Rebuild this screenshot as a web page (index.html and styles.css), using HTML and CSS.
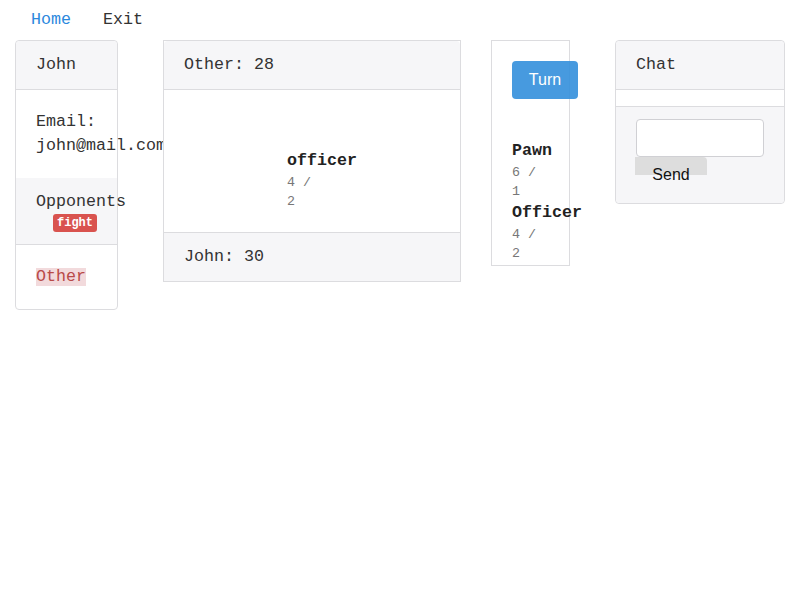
FILE: index.html
```html
<!DOCTYPE html>
<html>
<head>
<meta charset="utf-8">
<link rel="stylesheet" href="styles.css">
</head>
<body>
<nav class="nav">
  <a class="nav-link active" href="#">Home</a>
  <a class="nav-link" href="#">Exit</a>
</nav>
<main class="layout">
  <section class="card card-user">
    <div class="card-header">John</div>
    <div class="card-body">Email: john@mail.com</div>
    <div class="opponents">
      <div>Opponents</div>
      <div class="badge-row"><span class="badge">fight</span></div>
    </div>
    <div class="card-body"><span class="mark">Other</span></div>
  </section>

  <section class="card card-board">
    <div class="card-header">Other: 28</div>
    <div class="board">
      <div class="piece">
        <div class="piece-name">officer</div>
        <div class="piece-stats">4 / 2</div>
      </div>
    </div>
    <div class="card-footer">John: 30</div>
  </section>

  <section class="card card-hand">
    <button class="btn-turn">Turn</button>
    <div class="hand">
      <div class="piece-name">Pawn</div>
      <div class="piece-stats">6 / 1</div>
      <div class="piece-name">Officer</div>
      <div class="piece-stats">4 / 2</div>
    </div>
  </section>

  <section class="card card-chat">
    <div class="card-header">Chat</div>
    <div class="chat-body"></div>
    <div class="chat-footer">
      <input class="chat-input" type="text">
      <button class="btn-send">Send</button>
    </div>
  </section>
</main>
</body>
</html>
```

FILE: styles.css
```css
* { box-sizing: border-box; }
body {
  margin: 0;
  font-family: "Liberation Mono", monospace;
  font-size: 16.67px;
  line-height: 24px;
  color: #333;
  background: #fff;
}
.nav {
  display: flex;
  padding: 8px 0 8px 31px;
}
.nav-link {
  color: #333;
  text-decoration: none;
  margin-right: 32px;
}
.nav-link.active { color: #2b88dd; }

.layout {
  display: flex;
  align-items: flex-start;
  padding: 0 15px;
  gap: 30px;
}
.card {
  border: 1px solid #dcdcdf;
  background: #fff;
}
.card-user { width: 103px; margin-right: 15px; border-radius: 4px; }
.card-board { width: 298px; }
.card-hand { width: 79px; margin-right: 15px; padding: 20px 20px 2px; }
.card-chat { width: 170px; border-radius: 4px; }

.card-header {
  background: #f6f6f8;
  padding: 12px 20px;
  border-bottom: 1px solid #dcdcdf;
  border-radius: 4px 4px 0 0;
}
.card-body {
  padding: 20px;
}
.opponents {
  background: #f6f6f8;
  padding: 12px 20px;
  border-bottom: 1px solid #dcdcdf;
}
.badge-row {
  display: flex;
  justify-content: flex-end;
}
.badge {
  display: inline-block;
  background: #d9534f;
  color: #fff;
  font-weight: bold;
  font-size: 12px;
  line-height: 18px;
  padding: 0 4px;
  border-radius: 3px;
}
.mark {
  background: #f2dadc;
  color: #b94a48;
  display: inline-block;
  line-height: 18px;
}

.board {
  display: flex;
  justify-content: center;
  padding: 59px 0 21px;
  border-bottom: 1px solid #dcdcdf;
}
.piece {
  width: 50px;
  padding-right: 12px;
}
.piece-name {
  font-weight: bold;
  color: #222;
  white-space: nowrap;
}
.piece-stats {
  font-size: 13.33px;
  line-height: 19px;
  color: #777;
}
.card-footer {
  background: #f6f6f8;
  padding: 12px 20px;
}

.btn-turn {
  display: block;
  width: 66px;
  height: 38px;
  border: 0;
  border-radius: 4px;
  background: #3490dc;
  opacity: 0.9;
  color: #fff;
  font-family: "Liberation Sans", Arial, sans-serif;
  font-size: 16px;
  padding: 0;
  margin-bottom: 40px;
}
.chat-body {
  height: 17px;
  border-bottom: 1px solid #dcdcdf;
}
.chat-footer {
  background: #f6f6f8;
  padding: 12px 20px 10px;
  border-radius: 0 0 4px 4px;
}
.chat-input {
  display: block;
  width: 128px;
  height: 38px;
  border: 1px solid #d0d0d4;
  border-radius: 4px;
  background: #fff;
  margin: 0;
}
.btn-send {
  display: block;
  width: 72px;
  height: 36px;
  margin-left: -1px;
  border: 0;
  padding: 0;
  background: linear-gradient(#dddddd, #dddddd) top / 100% 18px no-repeat;
  border-radius: 0 4px 0 0;
  color: #111;
  font-family: "Liberation Sans", Arial, sans-serif;
  font-size: 16px;
}
```
